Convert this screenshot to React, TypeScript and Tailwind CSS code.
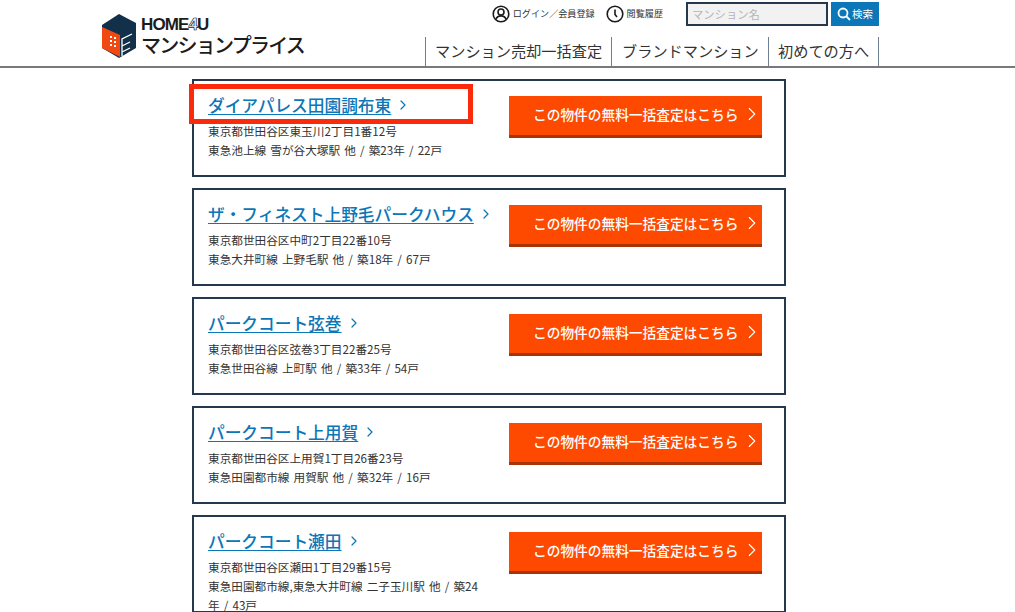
import { ChevronRight } from "lucide-react";

const fontStack = { fontFamily: '"Noto Sans CJK JP", "Liberation Sans", sans-serif' };

const mansions = [
  { name: "ダイアパレス田園調布東", address: "東京都世田谷区東玉川2丁目1番12号", access: "東急池上線 雪が谷大塚駅 他 / 築23年 / 22戸" },
  { name: "ザ・フィネスト上野毛パークハウス", address: "東京都世田谷区中町2丁目22番10号", access: "東急大井町線 上野毛駅 他 / 築18年 / 67戸" },
  { name: "パークコート弦巻", address: "東京都世田谷区弦巻3丁目22番25号", access: "東急世田谷線 上町駅 他 / 築33年 / 54戸" },
  { name: "パークコート上用賀", address: "東京都世田谷区上用賀1丁目26番23号", access: "東急田園都市線 用賀駅 他 / 築32年 / 16戸" },
  { name: "パークコート瀬田", address: "東京都世田谷区瀬田1丁目29番15号", access: "東急田園都市線,東急大井町線 二子玉川駅 他 / 築24年 / 43戸" },
];

function Logo() {
  return (
    <svg width="35" height="44" viewBox="0 0 35 44" className="shrink-0">
      <path d="M18 0 35 9V34L18 44 1 34V11Z" fill="#12304a" />
      <path d="M1 13 19 21V43L1 34Z" fill="#f04a12" />
      <path d="M21 42V25L31 20M21 32 29 28M21 38 29 34" fill="none" stroke="#fff" strokeWidth="1.300" />
      <path d="M9 22h2v2H9zM13 23h2v2h-2zM9 26h2v2H9zM13 27h2v2h-2zM9 30h2v2H9zM13 31h2v2h-2z" fill="#fff" />
    </svg>
  );
}

function Header() {
  return (
    <header className="h-[68px] border-b-2 border-[#77797b] bg-white">
      <div className="ml-[101px] flex h-full w-[778px] items-start justify-between">
        <div className="mt-[14px] flex items-start gap-[5px]">
          <Logo />
          <div className="text-[#1c1c1c]">
            <div className="mt-[2px] h-[17px] text-[17px] font-bold leading-[17px] tracking-[-0.900px]" style={{ fontFamily: '"Liberation Sans", sans-serif' }}>
              HOME<span className="text-white [-webkit-text-stroke:0.700px_#1c1c1c]">4</span>U
            </div>
            <div className="text-[20px] font-medium leading-[24px] tracking-[-1.750px]">マンションプライス</div>
          </div>
        </div>
        <div className="flex flex-col items-end">
          <div className="mt-[2px] flex h-[24px] items-center text-[#333]">
            <svg width="18" height="18" viewBox="0 0 18 18" fill="none" stroke="#1a1a1a" strokeWidth="1.600">
              <circle cx="9" cy="9" r="7.800" />
              <circle cx="9" cy="7" r="3" />
              <path d="M3.800 14.500c1-2.600 3-3.600 5.200-3.600s4.200 1 5.200 3.600" />
            </svg>
            <span className="ml-[3px] text-[9.100px]">ログイン／会員登録</span>
            <svg className="ml-[11px]" width="18" height="18" viewBox="0 0 18 18" fill="none" stroke="#1a1a1a" strokeWidth="1.600">
              <circle cx="9" cy="9" r="7.800" />
              <path d="M9 4.500V9.500L11 12" />
            </svg>
            <span className="ml-[3px] text-[9.100px]">閲覧履歴</span>
            <div className="ml-[23px] flex h-[24px] w-[142px] items-center border-2 border-[#24394d] bg-[#f2f2f2] pl-[4px] text-[11.300px] text-[#b5b5b5]">マンション名</div>
            <div className="ml-[3px] flex h-[24px] w-[48px] items-center justify-center gap-[1px] bg-[#0b76b8] text-[10.500px] text-white">
              <svg width="14" height="14" viewBox="0 0 14 14" fill="none" stroke="#fff" strokeWidth="1.800">
                <circle cx="6" cy="6" r="4.500" />
                <path d="M9.500 9.500 13 13" />
              </svg>
              検索
            </div>
          </div>
          <nav className="mt-[11px] flex h-[29px] items-center border-r border-[#6d7f90] text-[15.200px] leading-[27px] text-[#333]">
            <div className="flex h-full w-[186px] items-start border-l border-[#6d7f90] pl-[9px]">マンション売却一括査定</div>
            <div className="flex h-full w-[157px] items-start border-l border-[#6d7f90] pl-[10px]">ブランドマンション</div>
            <div className="flex h-full w-[110px] items-start border-l border-[#6d7f90] pl-[9px]">初めての方へ</div>
          </nav>
        </div>
      </div>
    </header>
  );
}

function MansionCard({ name, address, access }: { name: string; address: string; access: string }) {
  return (
    <div className="flex h-[98px] border-2 border-[#24394d] bg-white pl-[14px] pr-[22px]">
      <div className="w-[284px] shrink-0">
        <div className="mt-[11px] flex h-[26px] items-center">
          <a className="whitespace-nowrap text-[16.700px] font-medium leading-[24px] text-[#0b76b8] underline underline-offset-2">{name}</a>
          <ChevronRight className="ml-[4px] shrink-0 text-[#0b76b8]" size={16} strokeWidth={1.800} />
        </div>
        <div className="mt-[3px] w-[276px] text-[11.650px] leading-[19px] text-[#333] [word-spacing:1.500px]">
          <p>{address}</p>
          <p>{access}</p>
        </div>
      </div>
      <div className="mt-[15px] ml-auto flex h-[42px] w-[253px] items-center whitespace-nowrap border-b-[3px] border-[#a83407] bg-[#fd4a00] pb-[3px] pl-[24px] text-[13.700px] font-medium text-white">
        この物件の無料一括査定はこちら
        <ChevronRight className="ml-[3px] shrink-0" size={22} strokeWidth={1.200} />
      </div>
    </div>
  );
}

export default function App() {
  return (
    <div className="h-[612px] overflow-hidden bg-white" style={fontStack}>
      <Header />
      <main className="relative ml-[192px] mt-[11px] flex w-[594px] flex-col gap-[11px]">
        {mansions.map((m) => (
          <MansionCard key={m.name} {...m} />
        ))}
        <div className="absolute left-[-3px] top-[5px] h-[40px] w-[284px] border-[5px] border-[#fb2a0a]" />
      </main>
    </div>
  );
}
